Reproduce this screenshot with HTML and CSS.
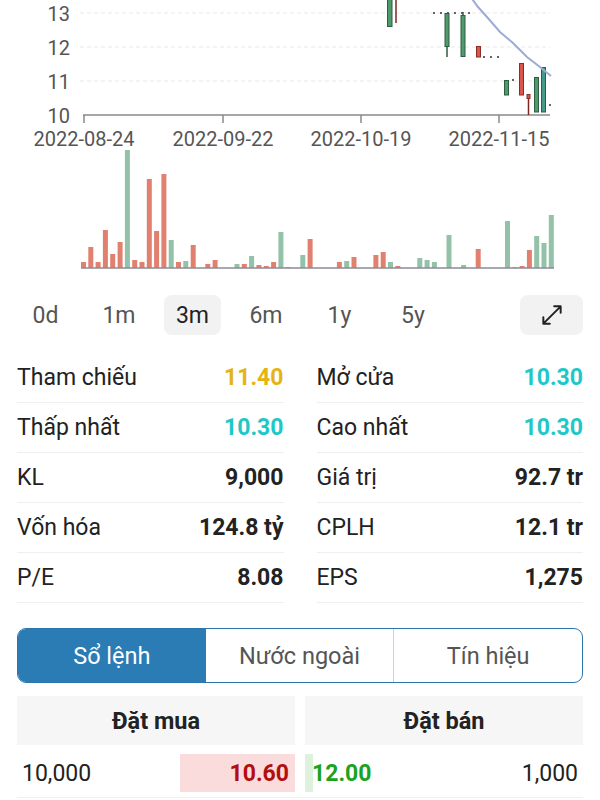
FILE: index.html
```html
<!DOCTYPE html>
<html>
<head>
    <title>Stock Detail</title>
    <link rel="stylesheet" href="styles.css">
</head>
<body>
    <div class="chart">
        <svg class="price-chart" width="600" height="150" viewBox="0 0 600 150">
            <g class="grid">
                <line x1="80" y1="13" x2="550" y2="13"/>
                <line x1="80" y1="47" x2="550" y2="47"/>
                <line x1="80" y1="81" x2="550" y2="81"/>
            </g>
            <g class="tick-label y-label">
                <text x="70" y="14">13</text>
                <text x="70" y="48">12</text>
                <text x="70" y="82">11</text>
                <text x="70" y="116">10</text>
            </g>
            <g class="axis">
                <line x1="83" y1="115" x2="550" y2="115"/>
                <line x1="84" y1="115" x2="84" y2="123"/>
                <line x1="223" y1="115" x2="223" y2="123"/>
                <line x1="361" y1="115" x2="361" y2="123"/>
                <line x1="499" y1="115" x2="499" y2="123"/>
            </g>
            <g class="tick-label x-label">
                <text x="84" y="139">2022-08-24</text>
                <text x="223" y="139">2022-09-22</text>
                <text x="361" y="139">2022-10-19</text>
                <text x="499" y="139">2022-11-15</text>
            </g>
            <!-- candles -->
            <g class="flat">
                <line x1="433" y1="13" x2="472" y2="13"/>
                <line x1="483" y1="57" x2="501" y2="57"/>
                <line x1="512" y1="80" x2="515" y2="80"/>
                <line x1="549" y1="105" x2="552" y2="105"/>
            </g>
            <g class="wick-up">
                <line x1="447" y1="40" x2="447" y2="57"/>
                <line x1="463" y1="12" x2="463" y2="20"/>
            </g>
            <g class="wick-down">
                <line x1="396" y1="-5" x2="396" y2="23"/>
                <line x1="528.5" y1="96" x2="528.5" y2="115"/>
            </g>
            <g class="up">
                <rect x="387.5" y="-5" width="4.5" height="31.5"/>
                <rect x="445" y="13.5" width="4" height="33"/>
                <rect x="461" y="15.5" width="4" height="41"/>
                <rect x="504.5" y="80.5" width="4" height="14.5"/>
                <rect x="534.5" y="77.5" width="4" height="34.5"/>
            </g>
            <rect class="up teal" x="541.5" y="67.5" width="4" height="44.5"/>
            <g class="down">
                <rect x="476.5" y="46.5" width="4" height="10.5"/>
                <rect x="519.5" y="63.5" width="4" height="31.5"/>
                <rect x="527" y="94.5" width="3" height="4"/>
            </g>
            <polyline class="ma" points="470,-4 478,7 487,17 500,32 513,43 527,57 540,67 551,76"/>
        </svg>
        <svg class="volume-chart" width="600" height="130" viewBox="0 0 600 130">
            <g class="vol-down">
                <rect x="81" y="112" width="5" height="6"/>
                <rect x="88.3" y="97" width="5" height="21"/>
                <rect x="95.6" y="112" width="5" height="6"/>
                <rect x="102.9" y="80" width="5" height="38"/>
                <rect x="110.2" y="104" width="5" height="14"/>
                <rect x="117.6" y="92" width="5" height="26"/>
                <rect x="132.2" y="110" width="5" height="8"/>
                <rect x="139.5" y="112" width="5" height="6"/>
                <rect x="146.8" y="29" width="5" height="89"/>
                <rect x="154.1" y="81" width="5" height="37"/>
                <rect x="161.4" y="24" width="5" height="94"/>
                <rect x="176" y="112" width="5" height="6"/>
                <rect x="190.7" y="95" width="5" height="23"/>
                <rect x="205.3" y="114" width="5" height="4"/>
                <rect x="212.6" y="110" width="5" height="8"/>
                <rect x="241.8" y="114" width="5" height="4"/>
                <rect x="256.4" y="115" width="5" height="3"/>
                <rect x="263.8" y="116" width="5" height="2"/>
                <rect x="271.1" y="112" width="5" height="6"/>
                <rect x="307.6" y="89" width="5" height="29"/>
                <rect x="336.9" y="112" width="5" height="6"/>
                <rect x="351.5" y="107" width="5" height="11"/>
                <rect x="373.4" y="105" width="5" height="13"/>
                <rect x="380.7" y="102" width="5" height="16"/>
                <rect x="395.3" y="116" width="5" height="2"/>
                <rect x="475.7" y="99" width="5" height="19"/>
                <rect x="519.6" y="116" width="5" height="2"/>
                <rect x="526.9" y="100" width="5" height="18"/>
            </g>
            <g class="vol-up">
                <rect x="124.9" y="0" width="5" height="118"/>
                <rect x="168.7" y="90" width="5" height="28"/>
                <rect x="183.3" y="111" width="5" height="7"/>
                <rect x="234.5" y="114" width="5" height="4"/>
                <rect x="249.1" y="106" width="5" height="12"/>
                <rect x="278.4" y="82" width="5" height="36"/>
                <rect x="285.7" y="117" width="5" height="1"/>
                <rect x="300.3" y="105" width="5" height="13"/>
                <rect x="344.2" y="111" width="5" height="7"/>
                <rect x="388" y="112" width="5" height="6"/>
                <rect x="417.3" y="108" width="5" height="10"/>
                <rect x="424.6" y="110" width="5" height="8"/>
                <rect x="431.9" y="112" width="5" height="6"/>
                <rect x="446.5" y="85" width="5" height="33"/>
                <rect x="461.1" y="115" width="5" height="3"/>
                <rect x="505" y="71" width="5" height="47"/>
                <rect x="512.3" y="117" width="5" height="1"/>
                <rect x="534.2" y="86" width="5" height="32"/>
                <rect x="541.5" y="93" width="5" height="25"/>
                <rect x="548.8" y="65" width="5" height="53"/>
            </g>
            <line class="vol-base" x1="81" y1="118" x2="554" y2="118"/>
        </svg>
    </div>

    <div class="ranges">
        <div class="range">0d</div>
        <div class="range">1m</div>
        <div class="range active">3m</div>
        <div class="range">6m</div>
        <div class="range">1y</div>
        <div class="range">5y</div>
        <div class="expand">
            <svg width="26" height="26" viewBox="0 0 24 24">
                <path d="M14 4h6v6M20 4L4 20M4 14v6h6"/>
            </svg>
        </div>
    </div>

    <div class="stats">
        <div class="stat-row"><span>Tham chiếu</span><span class="stat-value ref">11.40</span></div>
        <div class="stat-row"><span>Mở cửa</span><span class="stat-value floor">10.30</span></div>
        <div class="stat-row"><span>Thấp nhất</span><span class="stat-value floor">10.30</span></div>
        <div class="stat-row"><span>Cao nhất</span><span class="stat-value floor">10.30</span></div>
        <div class="stat-row"><span>KL</span><span class="stat-value">9,000</span></div>
        <div class="stat-row"><span>Giá trị</span><span class="stat-value">92.7 tr</span></div>
        <div class="stat-row"><span>Vốn hóa</span><span class="stat-value">124.8 tỷ</span></div>
        <div class="stat-row"><span>CPLH</span><span class="stat-value">12.1 tr</span></div>
        <div class="stat-row"><span>P/E</span><span class="stat-value">8.08</span></div>
        <div class="stat-row"><span>EPS</span><span class="stat-value">1,275</span></div>
    </div>

    <div class="tabs">
        <div class="tab active">Sổ lệnh</div>
        <div class="tab">Nước ngoài</div>
        <div class="tab">Tín hiệu</div>
    </div>

    <div class="book">
        <div class="book-head">
            <div>Đặt mua</div>
            <div>Đặt bán</div>
        </div>
        <div class="book-row">
            <div class="book-side bid">
                <span class="depth" style="width: 115px"></span>
                <span class="qty">10,000</span>
                <span class="price">10.60</span>
            </div>
            <div class="book-side ask">
                <span class="depth" style="width: 8px"></span>
                <span class="price">12.00</span>
                <span class="qty">1,000</span>
            </div>
        </div>
    </div>
</body>
</html>
```

FILE: styles.css
```css
body {
    font-family: Roboto, "Noto Sans", sans-serif;
    margin: 0;
    background: white;
    color: #222;
}
.chart svg {
    display: block;
}
.grid line {
    stroke: #e9e9e9;
    stroke-width: 1;
    stroke-dasharray: 4 3;
}
.axis line {
    stroke: #8a8a8a;
    stroke-width: 1.5;
}
.tick-label text {
    font-family: Roboto, sans-serif;
    font-size: 20px;
    fill: #555;
    dominant-baseline: central;
}
.y-label text {
    text-anchor: end;
}
.x-label text {
    text-anchor: middle;
}
.flat line {
    stroke: #333;
    stroke-width: 1.5;
    stroke-dasharray: 2 5;
}
.wick-up line {
    stroke: #2f5d41;
    stroke-width: 1.5;
}
.wick-down line {
    stroke: #7d2720;
    stroke-width: 1.5;
}
.up rect, rect.up {
    fill: #4f9a6d;
    stroke: #2f5d41;
    stroke-width: 1;
}
rect.teal {
    fill: #45988a;
}
.down rect {
    fill: #d9574a;
    stroke: #8c2d25;
    stroke-width: 1;
}
.ma {
    fill: none;
    stroke: #9eaad9;
    stroke-width: 2;
}
.vol-down rect {
    fill: #e2806f;
}
.vol-up rect {
    fill: #93c2a8;
}
.vol-base {
    stroke: #8c8a94;
    stroke-width: 1.5;
}
.ranges {
    display: flex;
    align-items: center;
    gap: 16.5px;
    padding: 15px 17px 0;
}
.range {
    width: 57px;
    height: 40px;
    border-radius: 8px;
    display: flex;
    align-items: center;
    justify-content: center;
    font-size: 23px;
    color: #555;
}
.range.active {
    background: #f2f2f2;
    color: #222;
}
.expand {
    margin-left: auto;
    width: 63px;
    height: 40px;
    border-radius: 8px;
    background: #f2f2f2;
    display: flex;
    align-items: center;
    justify-content: center;
}
.expand path {
    fill: none;
    stroke: #222;
    stroke-width: 1.8;
    stroke-linecap: round;
    stroke-linejoin: round;
}
.stats {
    display: grid;
    grid-template-columns: 1fr 1fr;
    column-gap: 33px;
    padding: 18px 17px 0;
}
.stat-row {
    display: flex;
    justify-content: space-between;
    align-items: center;
    height: 49px;
    border-bottom: 1px solid #efefef;
    font-size: 23px;
}
.stat-value {
    font-weight: 700;
}
.stat-value.ref {
    color: #e4b413;
}
.stat-value.floor {
    color: #1ec8c8;
}
.tabs {
    display: flex;
    margin: 25px 17px 0;
    height: 55px;
    box-sizing: border-box;
    border: 1.5px solid #2a76ad;
    border-radius: 9px;
    overflow: hidden;
}
.tab {
    flex: 1;
    display: flex;
    align-items: center;
    justify-content: center;
    font-size: 23.5px;
    color: #555;
}
.tab + .tab {
    border-left: 1px solid #d0d0d0;
}
.tab.active {
    background: #2b7bb5;
    color: white;
}
.tab.active + .tab {
    border-left: none;
}
.book {
    padding: 13px 17px 0;
}
.book-head {
    display: grid;
    grid-template-columns: 1fr 1fr;
    gap: 10px;
}
.book-head div {
    height: 49px;
    background: #f6f6f6;
    display: flex;
    align-items: center;
    justify-content: center;
    font-size: 23.5px;
    font-weight: 700;
}
.book-row {
    display: grid;
    grid-template-columns: 1fr 1fr;
    gap: 10px;
    margin-top: 9px;
    padding-bottom: 5px;
    border-bottom: 1px solid #f0f0f0;
}
.book-side {
    position: relative;
    height: 38px;
    display: flex;
    align-items: center;
    justify-content: space-between;
    font-size: 23px;
}
.book-side span {
    position: relative;
}
.book-side .depth {
    position: absolute;
    top: 0;
    bottom: 0;
}
.bid .depth {
    right: 0;
    background: #fadcdc;
}
.ask .depth {
    left: 0;
    background: #dcf2dc;
}
.bid .qty {
    padding-left: 5px;
}
.bid .price {
    padding-right: 6px;
    font-weight: 700;
    color: #b30d0d;
}
.ask .price {
    padding-left: 7px;
    font-weight: 700;
    color: #19a31e;
}
.ask .qty {
    padding-right: 5px;
}
```
